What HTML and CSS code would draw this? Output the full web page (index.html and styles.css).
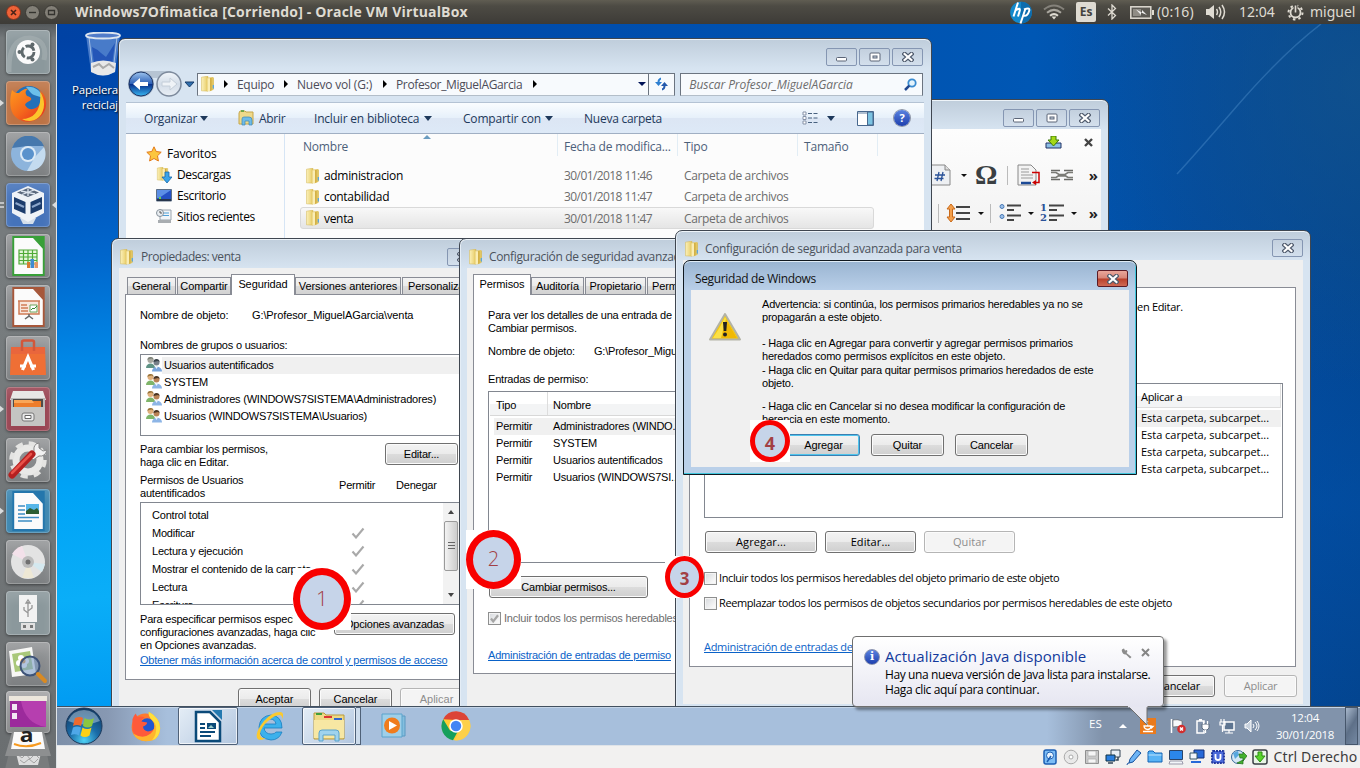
FILE: index.html
```html
<!DOCTYPE html>
<html lang="es">
<head>
<meta charset="utf-8">
<title>Windows7Ofimatica [Corriendo] - Oracle VM VirtualBox</title>
<link rel="stylesheet" href="styles.css">
</head>
<body>
<svg class="defs" width="0" height="0">
  <defs>
    <linearGradient id="gFold" x1="0" x2="1"><stop offset="0" stop-color="#fbf0b8"/><stop offset=".6" stop-color="#efda86"/><stop offset="1" stop-color="#dfc053"/></linearGradient>
    <linearGradient id="gBlue" x1="0" y1="0" x2="0" y2="1"><stop offset="0" stop-color="#9cc4ee"/><stop offset=".48" stop-color="#2f62b8"/><stop offset=".52" stop-color="#07308c"/><stop offset="1" stop-color="#39b7f2"/></linearGradient>
    <linearGradient id="gPale" x1="0" y1="0" x2="0" y2="1"><stop offset="0" stop-color="#f2f6fa"/><stop offset=".5" stop-color="#d3dde8"/><stop offset="1" stop-color="#e9eff5"/></linearGradient>
    <linearGradient id="gFox" x1="0" y1="0" x2="1" y2="1"><stop offset="0" stop-color="#ff9a1f"/><stop offset=".5" stop-color="#f4691c"/><stop offset="1" stop-color="#e3231f"/></linearGradient>
    <radialGradient id="gOrb" cx=".5" cy=".9" r=".9"><stop offset="0" stop-color="#4fd2f5"/><stop offset=".45" stop-color="#1a6ca8"/><stop offset="1" stop-color="#12375f"/></radialGradient>
    <symbol id="folder" viewBox="0 0 16 16"><path d="M1.500 1.200 7 .3h1v14.900l-6.500-.4z" fill="url(#gFold)" stroke="#d3b755" stroke-width=".5"/><path d="M7 1.800 13 1v13l-3 1.300-3-.3z" fill="#e2c662"/><path d="M7.500 2.200h2.700v12.500L7.500 15.300z" fill="#faedb4"/><path d="M10.200 2h1.300v12.300l-1.300.6z" fill="#cfaa3d"/><path d="M13 1.500h.8v12H13z" fill="#d9b94c"/><path d="M12.700 9h1.300v3.500h-1.300z" fill="#5ba6dc"/></symbol>
    <symbol id="users" viewBox="0 0 16 16"><circle cx="4.500" cy="4" r="3" fill="#e0b07c"/><path d="M1.500 4C1 0 8 0 7.500 4L6 2.500 3 3z" fill="#96733a"/><path d="M0 12c0-6 9-6 9 0z" fill="#7fb56a"/><circle cx="10.500" cy="6.500" r="3" fill="#b98255"/><path d="M7.500 6C7 2 14 2 13.500 6L12 5z" fill="#4a3524"/><path d="M6 15.500c0-6.500 10-6.500 10 0z" fill="#8db5e6"/><path d="M9 10.500l1.500 2.500 1.500-2.500z" fill="#eef4fb"/></symbol>
    <symbol id="users-g" viewBox="0 0 16 16"><circle cx="4.500" cy="4" r="3" fill="#a8a8a0"/><path d="M1.500 4C1 0 8 0 7.500 4L6 2.500 3 3z" fill="#7b8076"/><path d="M0 12c0-6 9-6 9 0z" fill="#5f9385"/><circle cx="10.500" cy="6.500" r="3" fill="#777f88"/><path d="M7.500 6C7 2 14 2 13.500 6L12 5z" fill="#39424a"/><path d="M6 15.500c0-6.500 10-6.500 10 0z" fill="#79a5dc"/><path d="M9 10.500l1.500 2.500 1.500-2.500z" fill="#eef4fb"/></symbol>
    <symbol id="x" viewBox="0 0 12 10"><path d="M2.600 2 9.400 8M9.400 2 2.600 8" stroke="#4f5a6c" stroke-width="4.400" stroke-linecap="square"/><path d="M2.600 2 9.400 8M9.400 2 2.600 8" stroke="#fff" stroke-width="2.200" stroke-linecap="square"/></symbol>
    <symbol id="min" viewBox="0 0 12 10"><rect x=".5" y="5.500" width="10" height="3.500" rx="1" fill="#fff" stroke="#5b6577"/></symbol>
    <symbol id="max" viewBox="0 0 12 10"><rect x="1" y="1" width="10" height="8" rx="1" fill="#fff" stroke="#5b6577"/><rect x="4" y="4" width="4" height="2" fill="#c9d5e2" stroke="#5b6577"/></symbol>
    <symbol id="tick" viewBox="0 0 14 12"><path d="M1.500 6.500 5 10.500 12.500 1.500" fill="none" stroke="#a9a9a9" stroke-width="2.100"/></symbol>
    <symbol id="doc" viewBox="0 0 34 42"><path d="M1 1h21l11 12v28H1z" fill="#fbfbfb" stroke="currentColor" stroke-width="2"/><path d="M22 0h12v13z" fill="currentColor"/></symbol>
    <symbol id="firefox" viewBox="0 0 38 38"><circle cx="20" cy="18" r="16" fill="#2370b8"/><path d="M17 3c9-1 15 4 18 12-5-4-9-2-13-6z" fill="#6cc0ea"/><path d="M3 6c3 3 4 3 7 3 3-3 7-5 9-4-3 2-3 4-1 7 3 1 5 2 4 4-3 2-5 2-6 5 3 6 11 5 14 0 5-7 2-12 0-15 9 5 9 18 3 25-8 9-22 9-29-1C0 23 1 13 3 6z" fill="url(#gFox)"/><path d="M31 8c6 8 5 19-1 25-7 6-13 4-17 2 12 0 20-9 18-27z" fill="#fcc52c"/></symbol>
    <symbol id="chrome" viewBox="0 0 40 40"><circle cx="20" cy="20" r="19" fill="#fc3"/><path d="M3 11A19 19 0 0 1 37.500 12H20z" fill="#dc4437"/><path d="M3 11l9 15 10 2-6 11A19 19 0 0 1 3 11z" fill="#159f5c"/><path d="M37.500 12A19 19 0 0 1 18 39l8-13 2-10-8-4z" fill="#fdd04a"/><circle cx="20" cy="20" r="9" fill="#fff"/><circle cx="20" cy="20" r="7" fill="#4285f4"/></symbol>
    <symbol id="pip" viewBox="0 0 5 8"><path d="M0 0l5 4-5 4z" fill="#dadcdd"/></symbol>
  </defs>
</svg>

<div class="screen">
  <header class="panel">
    <div class="dots">
      <svg width="15" height="15" viewBox="0 0 15 15"><circle cx="7.500" cy="7.500" r="7" fill="#ee6237" stroke="#7b3320"/><path d="M5 5l5 5M10 5l-5 5" stroke="#4a2318" stroke-width="1.600"/></svg>
      <svg width="15" height="15" viewBox="0 0 15 15"><circle cx="7.500" cy="7.500" r="7" fill="#827f77" stroke="#3a3833"/><path d="M4 7.500h7" stroke="#34332f" stroke-width="1.400"/></svg>
      <svg width="15" height="15" viewBox="0 0 15 15"><circle cx="7.500" cy="7.500" r="7" fill="#827f77" stroke="#3a3833"/><path d="M4.500 5.500h6v4h-6z" fill="none" stroke="#34332f" stroke-width="1.300"/></svg>
    </div>
    <div class="panel-title">Windows7Ofimatica [Corriendo] - Oracle VM VirtualBox</div>
    <div class="indicators">
      <svg class="i-hp" width="22" height="23" viewBox="0 0 22 22"><circle cx="11" cy="11" r="10.800" fill="#1389cc"/><path d="M11 .2a10.800 10.800 0 0 1 0 21.600z" fill="#0c6cae"/><g fill="none" stroke="#fff" stroke-width="2"><path d="M8 1 3.500 15M5.500 9c4-3 5-2 4 1L8 15M15.500 7 10.500 22M14 8c5-2 6-1 5 2s-3 5-6 4"/></g></svg>
      <svg class="i-wifi" width="22" height="16" viewBox="0 0 22 16"><g fill="none" stroke-width="2"><path d="M1 5.500Q11-2.500 21 5.500" stroke="#85827b"/><path d="M4 8.800Q11 3 18 8.800" stroke="#aaa79f"/><path d="M7 11.800Q11 8.500 15 11.800" stroke="#dfdbd2"/></g><path d="M8.500 12.500h5L11 15.500z" fill="#dfdbd2"/></svg>
      <span class="i-es">Es</span>
      <svg class="i-bt" width="10" height="16" viewBox="0 0 10 16"><path d="M1 4.500 8.500 11.500 5 15V1l3.500 3.500L1 11.500" fill="none" stroke="#dfdbd2" stroke-width="1.300"/></svg>
      <svg class="i-bat" width="24" height="13" viewBox="0 0 24 13"><rect x=".8" y=".8" width="20" height="11.400" fill="#5c5a54" stroke="#dfdbd2" stroke-width="1.500"/><path d="M22 4h2v5h-2z" fill="#dfdbd2"/><path d="M3 3h8v7H3z" fill="#8f8c85"/><path d="M6 3.500l6 3V4l5 5-6-2.500V9z" fill="#eee"/></svg>
      <span class="p-txt i-time">(0:16)</span>
      <svg class="i-vol" width="21" height="16" viewBox="0 0 21 16"><path d="M1 5h3l5-4v14l-5-4H1z" fill="#dfdbd2"/><path d="M11.500 5q2 3 0 6M14 3q3.500 5 0 10M17 1q5 7 0 14" fill="none" stroke="#dfdbd2" stroke-width="1.500"/></svg>
      <span class="p-txt i-clock">12:04</span>
      <svg class="i-gear" width="17" height="17" viewBox="0 0 17 17"><circle cx="8.500" cy="8.500" r="5" fill="none" stroke="#dfdbd2" stroke-width="1.800"/><circle cx="8.500" cy="8.500" r="7" fill="none" stroke="#dfdbd2" stroke-width="2" stroke-dasharray="2.500 3"/><path d="M6.500 0h4v8h-4z" fill="#4a4842"/><path d="M7.700 1.500h1.600v7H7.700z" fill="#dfdbd2"/></svg>
      <span class="p-txt i-user">miguel</span>
    </div>
  </header>

  <nav class="launcher">
    <div class="tile t-dash"><svg width="44" height="44" viewBox="0 0 44 44"><path d="M3 42Q2 8 24 8q18 2 14 22" fill="none" stroke="#a6b0b2" stroke-width="5" opacity=".6"/><circle cx="22" cy="22" r="12" fill="#fafafa"/><circle cx="22" cy="22" r="6" fill="none" stroke="#5f696c" stroke-width="2.800" stroke-dasharray="10.500 2"/><g fill="#5f696c"><circle cx="13.500" cy="22" r="2"/><circle cx="26.500" cy="14.500" r="2"/><circle cx="26.500" cy="29.500" r="2"/></g></svg></div>
    <div class="tile t-ff"><svg width="38" height="38"><use href="#firefox"/></svg><svg class="pip" width="4" height="8"><use href="#pip"/></svg></div>
    <div class="tile t-gray"><svg width="36" height="36" viewBox="0 0 36 36"><circle cx="18" cy="18" r="17" fill="#8db4dc"/><path d="M2 12A17 17 0 0 1 34 10H18z" fill="#4678ad"/><path d="M34 11A17 17 0 0 1 17 35l8-14z" fill="#c4dbef"/><circle cx="18" cy="18" r="8" fill="#dceaf6"/><circle cx="18" cy="18" r="6" fill="#5a92cc"/></svg></div>
    <div class="tile t-vbox"><svg width="36" height="40" viewBox="0 0 36 40"><path d="M10 33h16l-3 6H13z" fill="#d3deeb"/><path d="M18 1 34 8v20l-16 9L2 28V8z" fill="#eef2f7"/><path d="M18 3 29 7.500l-11 4.500L7 7.500z" fill="#5a687c"/><path d="M11 6l14 3M24 5 12 9.500M18 3.500V11" stroke="#dce4ee" stroke-width="1.300"/><path d="M4 12l11.500 5v12L4 24zM32 12l-11.500 5v12L32 24z" fill="#1c3c6c"/><path d="M5.500 18l8.500 4M22 22l8.500-4" stroke="#8ba5ca" stroke-width="2"/></svg><svg class="pip" width="4" height="8" viewBox="0 0 4 8"><path d="M0 2h4M0 6h4" stroke="#dadcdd" stroke-width="1.500"/></svg><svg class="pip-r" width="4" height="8" viewBox="0 0 5 8"><path d="M5 0 0 4l5 4z" fill="#dadcdd"/></svg></div>
    <div class="tile t-gray c-green"><svg width="33" height="40"><use href="#doc"/></svg><svg class="over" width="22" height="20" viewBox="0 0 22 20"><path d="M1 1h18v14H1zM1 4.500h18M1 8h18M1 11.500h18M5.500 1v14M10 1v14M14.500 1v14" fill="#e3f5d8" stroke="#4faa37" stroke-width="1.200"/><path d="M9 13h3v6H9z" fill="#d77b30"/><path d="M12.500 10H16v9h-3.500z" fill="#3f8bd0"/><path d="M16.500 13H20v6h-3.500z" fill="#e39865"/></svg></div>
    <div class="tile t-gray c-brown"><svg width="33" height="40"><use href="#doc"/></svg><svg class="over" width="22" height="20" viewBox="0 0 22 20"><path d="M1 1h20v13H1zM0 1h22" fill="#f8e6dc" stroke="#cf7c56" stroke-width="1.500"/><path d="M3 5h6M3 8h7M3 11h7" stroke="#cf7c56" stroke-width="1.500"/><path d="M12 5h7v7h-7z" fill="#fff" stroke="#6aa55a"/><path d="M13 10l2-2 1 1 3-3" stroke="#358a35" fill="none"/><path d="M11 14v2l-4 3M11 16l4 3" stroke="#666" fill="none" stroke-width="1.500"/></svg></div>
    <div class="tile t-gray"><svg width="38" height="40" viewBox="0 0 38 40"><path d="M2 9h34l1 28H1z" fill="#ef6f35"/><path d="M2 9h34v7H2z" fill="#e9663c"/><path d="M13 13V4q0-1.500 2-1.500h8q2 0 2 1.500v9" fill="none" stroke="#d2573a" stroke-width="2.500"/><path d="M13.500 32 19 19l5.500 13M11 28h6m4 0h6" fill="none" stroke="#fff" stroke-width="3.200"/></svg></div>
    <div class="tile t-red"><svg width="36" height="38" viewBox="0 0 36 38"><path d="M3 1h30l3 9H0z" fill="#e8e8e6"/><path d="M1 8h34v28H1z" fill="#b9b9b7"/><path d="M3 9h30v9H3z" fill="#4f4b47"/><path d="M4 11h27v7H4z" fill="#ed7c2a"/><path d="M4 10h18l2 3H4z" fill="#f9a658"/><path d="M1 17h34v19H1z" fill="#c4c4c2"/><rect x="12" y="23" width="12" height="8" rx="2" fill="#e8e8e8" stroke="#777"/><path d="M15 25.500h6v3h-6z" fill="#fff" stroke="#666"/></svg><svg class="pip" width="4" height="8"><use href="#pip"/></svg></div>
    <div class="tile t-gray"><svg width="40" height="40" viewBox="0 0 40 40"><circle cx="20" cy="20" r="12" fill="none" stroke="#e9e9e7" stroke-width="7"/><circle cx="20" cy="20" r="16.500" fill="none" stroke="#e4e4e2" stroke-width="4.500" stroke-dasharray="7 6"/><path d="M31 3q-6 1-5 8l-4 6 3 3 6-4q6 1 8-6l-4 1-4-3z" fill="#f1f1f1" stroke="#888"/><path d="M24 14 4 35" stroke="#b52020" stroke-width="7" stroke-linecap="round"/><path d="M23 14 4 33" stroke="#e85249" stroke-width="2.500" stroke-linecap="round"/></svg></div>
    <div class="tile t-writer c-blue"><svg width="33" height="40"><use href="#doc"/></svg><svg class="over" width="22" height="18" viewBox="0 0 22 18"><path d="M0 2h7M0 6h7M0 10h7M0 13.500h21M0 17h14" stroke="#3d8dc4" stroke-width="1.600"/><path d="M8 0h13v10H8z" fill="#57b6e8"/><path d="M8 10V7l4-3 4 2 3-2 2 3v3z" fill="#2d5e33"/></svg><svg class="pip" width="4" height="8"><use href="#pip"/></svg></div>
    <div class="tile t-gray"><svg width="36" height="36" viewBox="0 0 36 36"><circle cx="18" cy="18" r="17" fill="#e3e3e3"/><path d="M18 18 2 10A17 17 0 0 1 12 2z" fill="#f3e1ea"/><path d="M18 18l17 2-3 8z" fill="#d4e8ef"/><path d="M18 18l6 16H12z" fill="#eee8d5"/><circle cx="18" cy="18" r="6" fill="#bbb"/><circle cx="18" cy="18" r="2.500" fill="#707070"/></svg></div>
    <div class="tile t-dash"><svg width="20" height="38" viewBox="0 0 20 38"><path d="M1 1h18v27H1z" fill="#f2f2f2"/><path d="M3 29h14v7H3z" fill="#e1e1e1"/><path d="M5 31h3v3H5zM12 31h3v3h-3z" fill="#777"/><path d="M10 23V8M10 19l-4-3v-3M10 17l4-3v-3M8 9l2-3 2 3z" stroke="#969696" fill="none" stroke-width="1.300"/></svg></div>
    <div class="tile t-gray"><svg width="40" height="40" viewBox="0 0 40 40"><path d="M1 7 24 3l4 27-24 3z" fill="#f8f8f6"/><path d="M4 10l18-3 3 18-18 3z" fill="#a9c87a"/><g fill="#fff"><circle cx="13" cy="14" r="3"/><circle cx="18" cy="17" r="3"/><circle cx="11" cy="19" r="3"/><circle cx="16" cy="21" r="3"/></g><circle cx="15" cy="17" r="2.500" fill="#e5902b"/><circle cx="22" cy="22" r="9.500" fill="#7f9fc9" fill-opacity=".6" stroke="#3e5378" stroke-width="2"/><path d="M30 30l7 7" stroke="#d98a22" stroke-width="4" stroke-linecap="round"/></svg></div>
    <div class="tile t-work"><svg width="38" height="32" viewBox="0 0 38 32"><path d="M0 0h38v5H0z" fill="#ece6dc"/><path d="M1 5h36v26H1z" fill="#9c2a9c"/><path d="M12 5h25v26Q16 28 12 5z" fill="#c84fbd" opacity=".6"/><path d="M3 8h5v6H3zM3 17h5v6H3z" fill="#f3e9f5"/></svg></div>
    <div class="folded"><svg width="46" height="24" viewBox="0 0 46 24"><path d="M7 0h32l7 24H0z" fill="#8d8f90"/><path d="M9 0h28l3 17H6z" fill="#fafafa"/><path d="M9 12q13 5 27-1" stroke="#f79a1f" stroke-width="2" fill="none"/></svg><span>a</span></div>
    <div class="bin"><svg width="46" height="20" viewBox="0 0 46 20"><path d="M5 0h36l4 20H0z" fill="#797c7d"/><path d="M11 4h25l-3 12H14z" fill="#dedede"/><path d="M12 5l5 4 4-4 4 5 5-5 4 4M15 11l4 3 5-4 5 4 4-4" stroke="#a3a3a3" fill="none"/></svg></div>
  </nav>

  <div class="guest">
  <main class="desktop"><svg width="303" height="200" viewBox="0 0 303 200"><path d="M0 0h303v200H0z" fill="none"/><path d="M264 0Q225 30 180 82T120 150" fill="none" stroke="#5f9ed6" stroke-opacity=".35" stroke-width="1.500"/></svg></main>
  <div class="recycle">
    <svg width="36" height="46" viewBox="0 0 36 46"><path d="M1 3h34l-5 37q-12 7-24 0z" fill="#6f99dc" opacity=".65"/><path d="M7 15q5 2 9 6l5 4 9-14-3 22-18-1z" fill="#2456b8"/><path d="M4 5l4 35M32 5l-4 35" stroke="#c7d9f0" opacity=".7"/><ellipse cx="18" cy="3.500" rx="17" ry="3" fill="#517cc9" stroke="#dce5ef" stroke-width="1.800"/><path d="M6 31q12-5 25 0l-1 9q-12 7-24 0z" fill="#e8e8e8"/><path d="M8 35l6-3 4 4 6-4 5 4" stroke="#aaa" fill="none" stroke-width="2"/></svg>
    <span>Papelera de</span><span>reciclaje</span>
  </div>

  <section class="win libre">
    <div class="titlebar"><div class="ctl"><b><svg width="12" height="10"><use href="#min"/></svg></b><b><svg width="12" height="10"><use href="#max"/></svg></b><b><svg width="12" height="10"><use href="#x"/></svg></b></div></div>
    <div class="libre-body">
      <div class="lrow lr1"><svg width="17" height="13" viewBox="0 0 17 13"><path d="M1 7h15v5H1z" fill="#8cbfe4" stroke="#236"/><path d="M6 0h5v4h3l-5.500 6L3 4h3z" fill="#a4d816" stroke="#3c7a06"/></svg><svg width="9" height="9" viewBox="0 0 9 9"><path d="M1 1l7 7M8 1 1 8" stroke="#444" stroke-width="2.400"/></svg></div>
      <div class="lrow lr2">
        <svg width="20" height="23" viewBox="0 0 20 23"><path d="M-2 1h15l5 5v15H-2z" fill="#eef0f3" stroke="#888"/><path d="M13 1v5h5" fill="#ddd" stroke="#888"/><path d="M5 17l2-9M9 17l2-9M3 11h10M2.500 14.500h9" stroke="#2a5298" stroke-width="1.300"/></svg>
        <i class="car"></i><span class="omega">Ω</span><i class="sep"></i>
        <svg width="23" height="23" viewBox="0 0 23 23"><path d="M1 1h13l5 5v15H1z" fill="#f3f3f3" stroke="#888"/><path d="M4 5h8M4 8h8M4 11h12M4 14h12" stroke="#999"/><path d="M4 19h10" stroke="#1c4a96" stroke-width="2.500"/><path d="M15 8.500h7v10h-5" fill="none" stroke="#c00" stroke-width="1.500"/><path d="M19 16v5l-4-2.500z" fill="#c00"/></svg>
        <svg class="chain" width="22" height="12" viewBox="0 0 22 12"><path d="M0 1.500h9M13 1.500h9M0 10.500h9M13 10.500h9" stroke="#6a6a66" stroke-width="1.500"/><path d="M0 3.500h5l3 2h6l3-2h5M0 8.500h5l3-2M22 8.500h-5l-3-2M7 7h8" stroke="#7b7b76" stroke-width="1.600" fill="none"/></svg>
        <b class="more">»</b>
      </div>
      <div class="lrow lr3">
        <i class="sep"></i>
        <svg width="25" height="20" viewBox="0 0 25 20"><path d="M5 1l4 5H6.500v8H9l-4 5-4-5h2.500V6H1z" fill="#f4a04c" stroke="#c96a1a"/><path d="M10 4h14M10 10h14M10 16h14" stroke="#444" stroke-width="2.200"/></svg><i class="car"></i><i class="sep"></i>
        <svg width="22" height="20" viewBox="0 0 22 20"><circle cx="3" cy="3.500" r="2" fill="#9cc0ea" stroke="#4a7ab5"/><circle cx="3" cy="13.500" r="2" fill="#9cc0ea" stroke="#4a7ab5"/><path d="M8 2.500h14M8 7h7M8 12.500h14M8 17h7" stroke="#444" stroke-width="2"/></svg><i class="car"></i>
        <span class="nums">1<br>2</span><svg width="15" height="20" viewBox="0 0 15 20"><path d="M0 2.500h15M0 7h8M0 12.500h15M0 17h8" stroke="#444" stroke-width="2"/></svg><i class="car"></i><b class="more">»</b>
      </div>
    </div>
  </section>

  <section class="win explorer">
    <div class="titlebar"><div class="ctl"><b><svg width="12" height="10"><use href="#min"/></svg></b><b><svg width="12" height="10"><use href="#max"/></svg></b><b><svg width="12" height="10"><use href="#x"/></svg></b></div></div>
    <div class="addr">
      <svg class="nav" width="69" height="28" viewBox="0 0 69 28"><path d="M14 1h30v5Q28 10 14 6z" fill="#a8b6c6" opacity=".7"/><circle cx="14" cy="14" r="13" fill="#9fb0c4"/><circle cx="14" cy="14" r="12" fill="url(#gBlue)" stroke="#1f3768"/><path d="M6 14l7-6v4h8v4h-8v4z" fill="#fff"/><circle cx="42" cy="14" r="12" fill="url(#gPale)" stroke="#7d8a9c" stroke-width="1.500"/><path d="M50 14l-7-6v4h-8v4h8v4z" fill="#eff3f7" stroke="#c4ced9"/><path d="M58 12h9l-4.500 5z" fill="#2f6fae" stroke="#163c6b"/></svg>
      <div class="path"><svg width="16" height="16"><use href="#folder"/></svg><i class="ar"></i><span class="w1">Equipo</span><i class="ar"></i><span class="w2">Nuevo vol (G:)</span><i class="ar"></i><span class="w3">Profesor_MiguelAGarcia</span><i class="ar"></i><i class="car big"></i><span class="rf"><svg width="15" height="14" viewBox="0 0 15 14"><path d="M1 5h2.500Q3.500 1.500 7 .5v2Q5.500 3 5.500 5H8L4.500 9z" fill="#2d7fd0"/><path d="M14 9h-2.500q0 3.500-3.500 4.500v-2q1.500-.5 1.500-2.500H7l3.500-4z" fill="#2459ac"/></svg></span></div>
      <div class="search"><span>Buscar Profesor_MiguelAGarcia</span><svg width="13" height="13" viewBox="0 0 13 13"><circle cx="8" cy="5" r="3.700" fill="#e3f3fc" stroke="#3a8bd0" stroke-width="1.800"/><path d="M5.300 7.700 1 12" stroke="#21488f" stroke-width="2.500"/></svg></div>
    </div>
    <div class="toolbar">
      <span class="tb1">Organizar</span><i class="car nv"></i>
      <svg class="tbi" width="17" height="16" viewBox="0 0 17 16"><path d="M1 3l1-2h5l1 1h7v12H1z" fill="#efd98a" stroke="#c6a648"/><path d="M3 1h3" stroke="#4c9d3b" stroke-width="1.500"/><path d="M4 15V9q0-2 2-2h5q3 0 3 3v5h-3v-4H7v4z" fill="#6fbbe6" stroke="#3b86b8" stroke-width=".7"/></svg><span class="tb2">Abrir</span>
      <span class="tb3">Incluir en biblioteca</span><i class="car nv"></i>
      <span class="tb4">Compartir con</span><i class="car nv"></i>
      <span class="tb5">Nueva carpeta</span>
      <svg class="v1" width="16" height="14" viewBox="0 0 16 14"><path d="M1 1h3v3H1zM1 5.500h3v3H1zM1 10h3v3H1z" fill="#fff" stroke="#8793a8"/><path d="M6 2.500h4M11.500 2.500h4M6 7h4M11.500 7h4M6 11.500h4M11.500 11.500h4" stroke="#47617f" stroke-width="1.200"/></svg><i class="car nv"></i>
      <svg class="v2" width="17" height="15" viewBox="0 0 17 15"><path d="M.5.500h16v14H.5z" fill="#fff" stroke="#48688e"/><path d="M1 1h9v2H1z" fill="#aebed0"/><path d="M10.500 1H16v13h-5.500z" fill="#7cc3e2" stroke="#48688e"/></svg>
      <span class="help">?</span>
    </div>
    <div class="ex-body">
      <div class="side">
        <div class="s0"><svg width="16" height="16" viewBox="0 0 16 16"><path d="M8 .8l2.200 4.700 5 .7-3.700 3.600.9 5.200L8 12.500 3.600 15l.9-5.200L.8 6.200l5-.7z" fill="#fcc63e" stroke="#e27a1a"/></svg><span>Favoritos</span></div>
        <div class="s1"><svg width="16" height="16" viewBox="0 0 16 16"><use href="#folder" width="14" height="14"/><path d="M9 5h4v5h3l-5 6-5-6h3z" fill="#3aa3e8" stroke="#1668aa" stroke-width=".8"/></svg><span>Descargas</span></div>
        <div class="s1"><svg width="16" height="13" viewBox="0 0 16 13"><path d="M.5.500h15v11.500H.5z" fill="#2451c4" stroke="#5d6f86"/><path d="M1 1h14L3 9H1z" fill="#5c8fe6"/><path d="M1 10h14v2H1z" fill="#27364d"/><path d="M3 8h2v2H3z" fill="#6ad14c"/></svg><span>Escritorio</span></div>
        <div class="s1"><svg width="16" height="15" viewBox="0 0 16 15"><path d="M4 1h11v10H4z" fill="#f2f5f8" stroke="#9aa4ae"/><path d="M7 4h6M7 6.500h6" stroke="#4fa0d8"/><path d="M2 11h13v3H2z" fill="#a9adb1"/><circle cx="4" cy="4" r="3.500" fill="#e9edf1" stroke="#87919b"/><path d="M4 2v2h2" stroke="#555" fill="none"/></svg><span>Sitios recientes</span></div>
      </div>
      <div class="files">
        <i class="sortup"></i>
        <div class="fh"><span class="c1">Nombre</span><span class="c2">Fecha de modifica...</span><span class="c3">Tipo</span><span class="c4">Tamaño</span></div>
        <div class="fr"><svg width="16" height="16"><use href="#folder"/></svg><span class="fn">administracion</span><span class="fd">30/01/2018 11:46</span><span class="ft">Carpeta de archivos</span></div>
        <div class="fr"><svg width="16" height="16"><use href="#folder"/></svg><span class="fn">contabilidad</span><span class="fd">30/01/2018 11:47</span><span class="ft">Carpeta de archivos</span></div>
        <div class="fr sel"><svg width="16" height="16"><use href="#folder"/></svg><span class="fn">venta</span><span class="fd">30/01/2018 11:47</span><span class="ft">Carpeta de archivos</span></div>
      </div>
    </div>
  </section>

  <section class="win props">
    <div class="titlebar"><svg width="16" height="16"><use href="#folder"/></svg><span class="tt t-prop">Propiedades: venta</span><div class="ctl"><b><svg width="12" height="10"><use href="#x"/></svg></b></div></div>
    <div class="client">
      <div class="tabs"><span class="tab ta1">General</span><span class="tab ta2">Compartir</span><span class="tab on ta3">Seguridad</span><span class="tab ta4">Versiones anteriores</span><span class="tab ta5">Personalizar</span></div>
      <div class="pane ms">
        <div class="p-name"><span>Nombre de objeto:</span><span>G:\Profesor_MiguelAGarcia\venta</span></div>
        <div class="p-groups">Nombres de grupos o usuarios:</div>
        <div class="ulist">
          <div class="u"><svg width="16" height="16"><use href="#users-g"/></svg><span class="hl">Usuarios autentificados</span></div>
          <div class="u"><svg width="16" height="16"><use href="#users"/></svg><span>SYSTEM</span></div>
          <div class="u"><svg width="16" height="16"><use href="#users"/></svg><span>Administradores (WINDOWS7SISTEMA\Administradores)</span></div>
          <div class="u"><svg width="16" height="16"><use href="#users"/></svg><span>Usuarios (WINDOWS7SISTEMA\Usuarios)</span></div>
        </div>
        <div class="p-edit"><p>Para cambiar los permisos,<br>haga clic en Editar.</p><span class="btn b73">Editar...</span></div>
        <div class="p-head"><p>Permisos de Usuarios<br>autentificados</p><span class="h1c">Permitir</span><span class="h2c">Denegar</span></div>
        <div class="perm">
          <div class="perm-rows">
            <div>Control total</div>
            <div>Modificar<svg width="14" height="12"><use href="#tick"/></svg></div>
            <div>Lectura y ejecución<svg width="14" height="12"><use href="#tick"/></svg></div>
            <div>Mostrar el contenido de la carpeta<svg width="14" height="12"><use href="#tick"/></svg></div>
            <div>Lectura<svg width="14" height="12"><use href="#tick"/></svg></div>
            <div>Escritura<svg width="14" height="12"><use href="#tick"/></svg></div>
          </div>
          <div class="sbar"><i class="up"></i><b></b><i class="dn"></i></div>
        </div>
        <div class="p-adv"><p>Para especificar permisos especiales o<br>configuraciones avanzadas, haga clic<br>en Opciones avanzadas.</p><span class="btn b122">Opciones avanzadas</span></div>
        <a class="lnk more-info">Obtener más información acerca de control y permisos de acceso</a>
      </div>
      <div class="foot ms"><span class="btn b73">Aceptar</span><span class="btn b73">Cancelar</span><span class="btn b73 dis">Aplicar</span></div>
    </div>
  </section>

  <section class="win adv1">
    <div class="titlebar"><svg width="16" height="16"><use href="#folder"/></svg><span class="tt t-cfg">Configuración de seguridad avanzada</span></div>
    <div class="client">
      <div class="tabs"><span class="tab on tc1">Permisos</span><span class="tab tc2">Auditoría</span><span class="tab tc3">Propietario</span><span class="tab tc4">Permisos efectivos</span></div>
      <div class="pane ms">
        <p class="q1">Para ver los detalles de una entrada de permiso<br>Cambiar permisos.</p>
        <div class="q2"><span>Nombre de objeto:</span><span>G:\Profesor_MiguelAGarcia\venta</span></div>
        <div class="q3">Entradas de permiso:</div>
        <div class="etable">
          <div class="eh"><span>Tipo</span><span>Nombre</span></div>
          <div class="er hl2"><span>Permitir</span><span>Administradores (WINDO...</span></div>
          <div class="er"><span>Permitir</span><span>SYSTEM</span></div>
          <div class="er"><span>Permitir</span><span>Usuarios autentificados</span></div>
          <div class="er"><span>Permitir</span><span>Usuarios (WINDOWS7SI...</span></div>
        </div>
        <span class="btn b159">Cambiar permisos...</span>
        <div class="chk gray"><i><svg width="9" height="9" viewBox="0 0 14 12"><path d="M1.500 6 5 10.500 12.500 1" fill="none" stroke="#a5a5a5" stroke-width="3.500"/></svg></i><span>Incluir todos los permisos heredables</span></div>
        <a class="lnk l2">Administración de entradas de permiso</a>
      </div>
    </div>
  </section>

  <section class="win adv2">
    <div class="titlebar"><svg width="16" height="16"><use href="#folder"/></svg><span class="tt t-cfg">Configuración de seguridad avanzada para venta</span><div class="ctl"><b><svg width="12" height="10"><use href="#x"/></svg></b></div></div>
    <div class="client tah">
      <div class="pane">
        <div class="r1">en Editar.</div>
        <div class="rtable">
          <div class="rh">Aplicar a</div>
          <div class="rr hl3">Esta carpeta, subcarpet...</div>
          <div class="rr">Esta carpeta, subcarpet...</div>
          <div class="rr">Esta carpeta, subcarpet...</div>
          <div class="rr">Esta carpeta, subcarpet...</div>
        </div>
        <div class="rbtns"><span class="btn b112">Agregar...</span><span class="btn b91">Editar...</span><span class="btn b91 dis">Quitar</span></div>
        <div class="chk k1"><i></i><span>Incluir todos los permisos heredables del objeto primario de este objeto</span></div>
        <div class="chk k2"><i></i><span>Reemplazar todos los permisos de objetos secundarios por permisos heredables de este objeto</span></div>
        <a class="lnk l3">Administración de entradas de</a>
      </div>
      <div class="foot3"><span class="btn b73">Cancelar</span><span class="btn b73 dis">Aplicar</span></div>
    </div>
  </section>

  <section class="win dlg">
    <div class="titlebar"><span class="tt">Seguridad de Windows</span><div class="ctl red"><b><svg width="12" height="10"><use href="#x"/></svg></b></div></div>
    <div class="dlg-body ms">
      <svg class="warn" width="32" height="28" viewBox="0 0 32 28"><path d="M16 1 31 26.500H1z" fill="#f6c90e" stroke="#b3b3a6" stroke-width="2" stroke-linejoin="round"/><path d="M16 4 28 25H4l7-11z" fill="#fbe046"/><path d="M17 6l11 19H12z" fill="#f0b905"/><path d="M14 9h4l-.7 9h-2.600z" fill="#222"/><circle cx="16" cy="21.500" r="2" fill="#222"/></svg>
      <div class="dlg-txt">
        <p>Advertencia: si continúa, los permisos primarios heredables ya no se<br>propagarán a este objeto.</p>
        <p class="g13">- Haga clic en Agregar para convertir y agregar permisos primarios<br>heredados como permisos explícitos en este objeto.</p>
        <p class="g1">- Haga clic en Quitar para quitar permisos primarios heredados de este<br>objeto.</p>
        <p class="g10">- Haga clic en Cancelar si no desea modificar la configuración de<br>herencia en este momento.</p>
        <div class="dbtns"><span class="btn b73 def">Agregar</span><span class="btn b73">Quitar</span><span class="btn b73">Cancelar</span></div>
      </div>
    </div>
  </section>
  </div>

  <div class="mark m1"><span>1</span></div>
  <div class="mark m2"><span>2</span></div>
  <div class="mark m3"><span>3</span></div>
  <div class="mark m4"><span>4</span></div>

  <footer class="taskbar">
    <svg class="orb" width="38" height="38" viewBox="0 0 38 38"><circle cx="19" cy="19" r="18" fill="url(#gOrb)" stroke="#1d3a5c"/><path d="M3 14Q8 3 19 3t16 11q-16 7-32 0z" fill="#cfe2f0" opacity=".45"/><path d="M10 11q5-2 8 0l-2 8q-4-2-8 0z" fill="#ee6a2d"/><path d="M19.500 11q5 3 9.500 0l-2 8q-4 3-9 0z" fill="#8cc63f"/><path d="M8 20.500q4-2 8 0l-2 8q-4-2-8-.5z" fill="#4fa8e8"/><path d="M17.500 20.500q5 3 9 0l-2 8q-5 3-9 0z" fill="#fcd116"/></svg>
    <svg class="tfox" width="31" height="31" viewBox="0 0 38 38"><circle cx="19" cy="20" r="17" fill="#ff7a2e"/><circle cx="21" cy="18" r="9" fill="#2457cf"/><path d="M3 10q2-5 4-7l2 4q6-1 9 1-4 2-4 5l7 1q0 3-5 5 0 5 6 6 6 0 9-5 1 9-7 12Q8 35 3 24z" fill="#ff5a3a"/><path d="M23 1q14 8 14 20-1 16-17 16Q8 37 4 28q12 7 21 0 7-6 4-14l-4-5q-3-4-2-8z" fill="#ffb42e"/><path d="M23 1q14 8 14 20-1 12-10 15 6-7 5-17-1-5-7-10-3-4-2-8z" fill="#ffdf3d"/></svg>
    <div class="tbtn w"><svg width="28" height="33" viewBox="0 0 28 33"><path d="M2 2h14l10 10v19H2z" fill="#fff" stroke="#0b4a79" stroke-width="2.500"/><path d="M18 0h10v10z" fill="#2379b0"/><path d="M6 14h5M6 18h5M6 22h15M6 26h11" stroke="#0b4a79" stroke-width="2"/><path d="M13 13h9v6h-9z" fill="#0b4a79"/><path d="M14 18l3-3 3 3z" fill="#9cc"/></svg></div>
    <svg class="ie" width="32" height="32" viewBox="0 0 32 32"><path d="M28 18H10q1 6 7 6 4 0 5-2h6q-3 8-11 8Q5 29 5 17 6 6 17 5q11 1 11 13zM10 14h12q-1-5-6-5t-6 5z" fill="#3cb1ec" stroke="#1b7fc0" stroke-width=".8" fill-rule="evenodd"/><path d="M28 10q3-8-2-8-8 0-16 9-9 11-7 17 2 4 9 0-6 1-6-4 1-7 8-13 8-7 12-6 3 1 2 5z" fill="#fbc92f"/></svg>
    <div class="tbtn e"><svg width="34" height="31" viewBox="0 0 34 31"><path d="M2 2h10l2 2h18v24H2z" fill="#efd984" stroke="#b99a3e"/><path d="M4 3h6" stroke="#3f9e3a" stroke-width="2"/><path d="M12 6h8" stroke="#d33" stroke-width="2"/><path d="M22 8h8" stroke="#36c" stroke-width="2"/><path d="M2 9h30v18H2z" fill="#f7e7a3"/><path d="M7 30V22q0-3 3-3h14q3 0 3 3v8h-4v-6H11v6z" fill="#9fd3ee" stroke="#5ba3cc"/></svg></div>
    <i class="tedge"></i>
    <svg class="wmp" width="28" height="26" viewBox="0 0 28 26"><path d="M8 3h17v20H8z" fill="#85bede" stroke="#5b9ac2"/><path d="M2 1h20v23H2z" fill="#9fcfe8" stroke="#5ba3cc"/><circle cx="12" cy="12.500" r="8" fill="#f07c1d"/><path d="M9 8l8 4.500-8 4.500z" fill="#fff"/></svg>
    <svg class="tchr" width="30" height="30"><use href="#chrome"/></svg>
    <div class="tray">
      <span class="t-es">ES</span><i class="tri"></i>
      <svg class="jv" width="16" height="16" viewBox="0 0 16 16"><path d="M0 0h16v16H0z" fill="#ea7a1c"/><path d="M8 3q-3 2 0 4M4 8h7q0 3-3 3.500Q4 11 4 8zM11 8.500h2l-2 2M3 13.500h10" stroke="#fff" fill="none" stroke-width="1.300"/></svg>
      <svg class="fl" width="16" height="16" viewBox="0 0 16 16"><path d="M1.500 1v14" stroke="#fff" stroke-width="1.500"/><path d="M3 2q4-1 9 1v6q-5-1-9 0z" fill="#f7f9fb" stroke="#444" stroke-width=".5"/><circle cx="11.500" cy="11" r="4.300" fill="#d22d2d"/><path d="M10 9.500l3 3M13 9.500l-3 3" stroke="#fff" stroke-width="1.500"/></svg>
      <svg class="pl" width="15" height="16" viewBox="0 0 15 16"><path d="M2 3h7v12H2z" fill="none" stroke="#fff" stroke-width="1.500"/><path d="M4 1h3v2H4z" fill="#fff"/><path d="M7 6h7v4l-2 2H9l-2-2z" fill="#fff" stroke="#5c6c80"/><path d="M8.500 3v3M12.500 3v3M10.500 12v3" stroke="#fff" stroke-width="1.300"/></svg>
      <svg class="nt" width="16" height="16" viewBox="0 0 16 16"><path d="M5 4h10v8H5z" fill="#5e7591" stroke="#fff" stroke-width="1.500"/><path d="M10 12v3M6 15h8M2 1v3M5 1v3M1 4h5v3H1zM3.500 7v7" stroke="#fff" stroke-width="1.200" fill="none"/></svg>
      <svg class="sp" width="16" height="16" viewBox="0 0 16 16"><path d="M1 6h2l4-4v12l-4-4H1z" fill="#c8d2de" stroke="#fff"/><path d="M9 6q2 2 0 4M11 4q4 4 0 8M13 3q4 5 0 10" fill="none" stroke="#fff"/></svg>
      <div class="clk"><span>12:04</span><span>30/01/2018</span></div>
      <i class="peek"></i>
    </div>
  </footer>

  <div class="status">
    <svg width="16" height="16" viewBox="0 0 16 16"><rect x="2" y="1" width="12" height="14" rx="2" fill="#7dbdf5" stroke="#1d5fb4" stroke-width="1.500"/><circle cx="8" cy="6.500" r="3.500" fill="#e8f4ff" stroke="#1d5fb4"/><path d="M5 13l4-6" stroke="#1d5fb4" stroke-width="1.500"/></svg>
    <svg width="16" height="16" viewBox="0 0 16 16"><circle cx="8" cy="8" r="6.800" fill="#e9e9e9" stroke="#aaa"/><circle cx="8" cy="8" r="2" fill="#fff" stroke="#aaa"/></svg>
    <svg width="16" height="16" viewBox="0 0 16 16"><path d="M1.500 1.500h13v13h-13z" fill="#c9c9c9" stroke="#8f8f8f"/><path d="M4 2h8v5H4zM4 10h8v4H4z" fill="#f5f5f5" stroke="#aaa" stroke-width=".7"/></svg>
    <svg width="16" height="16" viewBox="0 0 16 16"><path d="M6 1h9v7H6z" fill="#e8eef5" stroke="#345"/><path d="M1 6h9v6H1z" fill="#2a7fe0" stroke="#134"/><path d="M3 14h5M13 8v3h-2" stroke="#345" fill="none" stroke-width="1.500"/></svg>
    <svg width="16" height="16" viewBox="0 0 16 16"><path d="M11 1l4 3-8 9-4 1 1-4z" fill="#6db4f5" stroke="#15529f"/><path d="M3 14q-2 0-2 2" stroke="#15529f" fill="none"/></svg>
    <svg width="16" height="16" viewBox="0 0 16 16"><path d="M1 13V3l1-1h4l2 2h7v9z" fill="#58b3f5" stroke="#1565b5"/><path d="M1.500 6h13" stroke="#bfe2fb"/></svg>
    <svg width="16" height="16" viewBox="0 0 16 16"><path d="M1.500 1.500h13v9h-13z" fill="#2b87ea" stroke="#2b4568"/><path d="M2 12h12l1 3H1z" fill="#f3f6fa" stroke="#99a"/></svg>
    <svg width="16" height="16" viewBox="0 0 16 16"><path d="M5 1h10v8H5z" fill="#2769d8" stroke="#122f77"/><path d="M1 4h7v6H1z" fill="#f1f5fb" stroke="#356"/><path d="M2 12h10v2H2z" fill="#2769d8"/></svg>
    <svg width="16" height="16" viewBox="0 0 16 16"><rect x="2" y="2" width="12" height="12" rx="1" fill="#4a68d8" stroke="#2338a0" stroke-width="2" stroke-dasharray="2 1"/><path d="M5.500 5v3.500q0 2.500 2.500 2.500t2.500-2.500V5" fill="none" stroke="#fff" stroke-width="1.800"/></svg>
    <svg width="16" height="16" viewBox="0 0 16 16"><circle cx="7" cy="8" r="6.500" fill="#d5e7f5" stroke="#369"/><path d="M2 4l5-2 1 4-4 4z" fill="#58a7df"/><path d="M8 5h4V3l4 4-4 5V9H9zM6 14l6-3v4z" fill="#43b02e" stroke="#24701a" stroke-width=".7"/></svg>
    <svg width="16" height="16" viewBox="0 0 16 16"><rect x="1" y="1" width="14" height="14" rx="2" fill="#e8f5e6" stroke="#3a3f44" stroke-width="1.500"/><path d="M6 3h4v4h3l-5 6-5-6h3z" fill="#57d52a" stroke="#2c8a12"/></svg>
    <span>Ctrl Derecho</span>
  </div>

  <aside class="balloon">
    <svg class="tail" width="22" height="20" viewBox="0 0 22 20"><path d="M0 0l19 19V0" fill="#e7e7f1" stroke="#6f6f6f"/><path d="M0 0h19.500" stroke="#e6e6f1" stroke-width="2.500"/></svg>
    <span class="info">i</span>
    <div class="bal-main">
      <div class="bal-h"><span>Actualización Java disponible</span><svg width="11" height="11" viewBox="0 0 11 11"><path d="M1 3.500Q0 1 3 .5l1 2 2-.5q1 2-.5 3L10.500 9 9 10.500 5 6.500Q2 7 1 3.500z" fill="#8c8c8c"/></svg><svg width="9" height="9" viewBox="0 0 9 9"><path d="M1 1l7 7M8 1 1 8" stroke="#858585" stroke-width="2"/></svg></div>
      <p>Hay una nueva versión de Java lista para instalarse.<br>Haga clic aquí para continuar.</p>
    </div>
  </aside>
</div>
</body>
</html>
```
FILE: styles.css
```css
* { box-sizing: border-box; }
html, body { margin: 0; height: 100%; }
body { overflow: hidden; font-family: "Open Sans", "Noto Sans", sans-serif; }
p { margin: 0; }
i { font-style: normal; display: block; flex: none; }
svg { flex: none; display: block; }
.defs { position: absolute; }
.screen { position: relative; width: 1360px; height: 768px; overflow: hidden; background: #f2f1f0; white-space: nowrap; }

/* host panel */
.panel { height: 24px; display: flex; align-items: center; background: linear-gradient(#605d52, #4d4b44 25%, #3d3b37); color: #dfdbd2; }
.dots { display: flex; gap: 4px; padding-left: 6px; width: 75px; flex: none; }
.panel-title { font: bold 14px/24px "Open Sans"; letter-spacing: .17px; width: 935px; flex: none; }
.indicators { display: flex; align-items: center; font-size: 14px; }
.i-wifi { margin-left: 11px; }
.i-es { width: 20px; height: 20px; margin-left: 11px; background: #dfdbd2; color: #45433e; border-radius: 2px; font: bold 12px/20px "Open Sans"; text-align: center; }
.i-bt { margin-left: 11px; }
.i-bat { margin-left: 13px; }
.p-txt { font: 14px/24px "Noto Sans"; }
.i-time { width: 51px; padding-left: 3px; letter-spacing: .1px; }
.i-clock { width: 49px; padding-left: 13px; }
.i-gear { margin-left: 12px; }
.i-user { margin-left: 6px; }

/* launcher */
.launcher { position: absolute; left: 0; top: 24px; width: 57px; height: 744px; padding: 6px 0 0 6px; display: flex; flex-direction: column; gap: 7px; background: linear-gradient(#54585b, #74797b 14px, #777c7e 40%, #6a6e70); border-right: 1px solid #dfe3e6; }
.tile { position: relative; width: 44px; height: 44px; flex: none; border-radius: 4px; display: flex; align-items: center; justify-content: center; box-shadow: inset 0 0 0 1px rgba(255,255,255,.22), inset 0 8px 10px rgba(255,255,255,.12), 0 1px 3px rgba(0,0,0,.45); }
.t-dash { background: #8b989c; }
.t-ff { background: #bd7345; }
.t-gray { background: linear-gradient(#96989a, #7d8082); }
.t-vbox { background: #4573ba; }
.t-red { background: #994452; }
.t-writer { background: #3c86b0; }
.t-work { background: linear-gradient(#a5a5a7, #87898a); height: 42px; margin-top: -2px; }
.over { position: absolute; left: 12px; top: 15px; }
.c-green { color: #38a038; } .c-brown { color: #a7573a; } .c-blue { color: #2476ac; }
.pip { position: absolute; left: -6px; top: 18px; }
.pip-r { position: absolute; right: -6px; top: 18px; }
.folded { position: relative; height: 24px; flex: none; margin: -8px 0 0 -1px; }
.folded span { position: absolute; left: 16px; top: -9px; font: bold 19px/24px "Open Sans"; color: #222; transform: scaleX(1.2); }
.bin { flex: none; margin: -14px 0 0 -1px; height: 20px; }

/* guest screen */
.guest { position: absolute; left: 0; top: 0; width: 1360px; height: 707px; overflow: hidden; }
.desktop { position: absolute; left: 57px; top: 24px; width: 1303px; height: 722px; display: flex; justify-content: flex-end; background:
  linear-gradient(175deg, #0042a5 0, #0050b6 110px, #0066cc 220px, #0087e6 320px, #00a3f6 450px, #0aaef8 560px, #0099f2 680px) no-repeat 0 15px / 200px 700px,
  radial-gradient(circle at 1303px 60px, rgba(20,84,140,.7), transparent 300px),
  linear-gradient(180deg, transparent 0, transparent 200px, rgba(0,90,190,.3) 480px, transparent 680px),
  linear-gradient(90deg, #0042a4, #0057b4 75%, #024ba0 88%, #034590); }
.recycle { position: absolute; left: 61px; top: 32px; width: 84px; display: flex; flex-direction: column; align-items: center; color: #fff; font-size: 11.5px; line-height: 15px; letter-spacing: -.15px; text-shadow: 1px 1px 2px #000; }
.recycle svg { margin-bottom: 4px; }

/* window chrome */
.win { position: absolute; border: 1px solid #3f4650; border-radius: 7px 7px 0 0; padding: 0 7px; display: flex; flex-direction: column; background: linear-gradient(#bfcddb, #d7e4f1 30px); box-shadow: inset 0 1px 0 #eef4f9, inset 1px 0 0 #e4edf6; }
.titlebar { height: 28px; flex: none; display: flex; align-items: center; padding-top: 6px; }
.tt { font-size: 12px; color: #4b525c; margin-left: 6px; letter-spacing: -.35px; }
.t-prop { letter-spacing: -.44px; }
.ctl { display: flex; gap: 2px; margin: 2px 0 0 auto; align-self: flex-start; }
.ctl b { width: 31px; height: 18px; border: 1px solid #8596b2; border-radius: 2px; background: linear-gradient(#c3d0de, #d3dfec); display: flex; align-items: center; justify-content: center; }
.client { flex: 1; background: #f0f0f0; padding-left: 6px; }
.car { width: 0; height: 0; border: 3px solid transparent; border-top: 3px solid #111; border-bottom: 0; }
.sep { width: 1px; height: 19px; background: #bbb; }
.btn { height: 22px; border: 1px solid #707070; border-radius: 3px; background: linear-gradient(#f3f3f3, #ebebeb 49%, #dcdcdc 51%, #cfcfcf); box-shadow: inset 0 0 0 1px #fbfbfb; text-align: center; line-height: 20px; display: block; flex: none; }
.btn.dis { border-color: #b5b5b5; background: #f4f4f4; color: #8d8d8d; }
.btn.def { border-color: #3c7fb1; box-shadow: inset 0 0 0 1px #4fc4ec; }
.b73 { width: 73px; } .b91 { width: 91px; } .b112 { width: 112px; } .b122 { width: 121px; } .b159 { width: 159px; }
.lnk { display: block; color: #0a62c8; text-decoration: underline; }

.libre { left: 900px; top: 99px; width: 209px; height: 200px; }
.libre .titlebar { height: 29px; padding: 0; }
.libre .ctl { margin: 9px 1px 0 auto; }
.libre-body { flex: 1; background: linear-gradient(#fdfdfd, #ececec); padding-left: 24px; }
.lrow { display: flex; align-items: center; }
.lr1 { height: 26px; padding-left: 113px; gap: 22px; }
.lr2 { height: 40px; }
.lr3 { height: 36px; }
.lr2 .car { margin-left: 9px; }
.omega { font: bold 28px/30px "Liberation Serif"; color: #3a3f42; margin-left: 8px; width: 24px; }
.lr2 .sep { margin: 0 9px 0 8px; }
.chain { margin-left: 11px; }
.more { font: bold 15px/18px "Open Sans"; margin-left: auto; margin-right: 3px; color: #222; }
.lr3 .sep { margin-left: 6px; margin-right: 7px; }
.lr3 svg { margin-right: 7px; }
.lr3 .car + .sep { margin: 0 8px 0 6px; }
.nums { font: bold 10px/10px "DejaVu Serif"; color: #2a5298; margin: 0 2px 0 6px; }

.explorer { left: 118px; top: 38px; width: 814px; height: 260px; }
.explorer .titlebar { height: 31px; padding-top: 0; }
.explorer .ctl { margin: 9px 1px 0 auto; }
.addr { height: 32px; flex: none; display: flex; align-items: center; font-size: 12px; letter-spacing: -.2px; color: #4c4c58; margin-right: 1px; padding-bottom: 4px; }
.nav { margin-left: 1px; }
.path { width: 479px; height: 23px; margin-left: 1px; border: 1px solid #6b7480; border-bottom-color: #b3bec9; background: #f7fafd; display: flex; align-items: center; padding-left: 2px; }
.ar { width: 0; height: 0; border: 4px solid transparent; border-left: 4px solid #000; border-right: 0; margin: 0 9px; }
.path svg + .ar { margin-left: 8px; }
.w1 { width: 38px; letter-spacing: -.3px; } .w2 { width: 77px; } .w3 { width: 128px; letter-spacing: -.35px; }
.big { border-width: 4px; margin-left: 92px; border-top-color: #001257; }
.rf { border-left: 1px solid #6b7480; height: 21px; margin-left: auto; width: 26px; display: flex; align-items: center; justify-content: center; }
.search { width: 243px; height: 23px; margin-left: 5px; padding: 0 5px 0 8px; border: 1px solid #6b7480; border-bottom-color: #b3bec9; background: #f7fafd; display: flex; align-items: center; justify-content: space-between; font-style: italic; color: #6d6d6d; }
.search span { letter-spacing: -.08px; }
.toolbar { height: 32px; flex: none; display: flex; align-items: center; padding-left: 18px; font-size: 12px; letter-spacing: -.2px; color: #1e395b; background: linear-gradient(#fafdff, #e6f0fa 50%, #dce6f4 51%, #dde9f7); border-top: 1px solid #b4c3d4; border-bottom: 1px solid #a0afc3; }
.toolbar .nv { border-width: 4.500px; border-top: 5px solid #1e395b; border-bottom: 0; }
.tb1 { width: 56px; } .tbi { margin-left: 30px; } .tb2 { margin-left: 4px; width: 55px; letter-spacing: -.3px; }
.tb3 { width: 110px; } .tb4 { width: 82px; margin-left: 31px; } .tb5 { margin-left: 31px; width: 218px; letter-spacing: -.25px; }
.toolbar .v1 { margin-right: 9px; }
.v2 { margin-left: 22px; }
.help { margin-left: 20px; width: 16px; height: 16px; border-radius: 50%; background: linear-gradient(#5b83e0, #1d3fae); box-shadow: 0 0 0 1px #8d95a5; color: #fff; font: bold 11px/16px "Open Sans"; text-align: center; }
.ex-body { flex: 1; display: flex; background: #fcfcfc; font-size: 12px; letter-spacing: -.2px; }
.side { width: 159px; border-right: 1px solid #d6e5f5; padding: 9px 0 0 20px; }
.side div { height: 21px; display: flex; align-items: center; gap: 5px; }
.side .s1 { padding-left: 10px; letter-spacing: -.4px; }
.files { width: 620px; position: relative; }
.sortup { position: absolute; left: 138px; top: 1px; border: 4px solid transparent; border-bottom: 4px solid #6b9cc0; border-top: 0; }
.fh { display: flex; height: 24px; line-height: 26px; color: #4c607a; margin-bottom: 7px; }
.fh span { border-right: 1px solid #e2edf5; height: 22px; padding-left: 6px; }
.fh .c1 { width: 273px; padding-left: 18px; } .fh .c2, .fh .c3 { width: 120px; } .fh .c4 { width: 80px; }
.fr { height: 21px; width: 574px; margin-left: 15px; padding-left: 4px; display: flex; align-items: center; color: #6d6d6d; border: 1px solid transparent; }
.sel { border-color: #d9d9d9; border-radius: 3px; background: linear-gradient(#f8f8f8, #e5e5e5); height: 22px; }
.fn { width: 243px; padding-left: 3px; color: #000; letter-spacing: -.32px; } .fd { width: 120px; letter-spacing: -.58px; } .ft { letter-spacing: -.35px; }

/* dialogs */
.ms, .tabs { font-family: "Liberation Sans", Arial, sans-serif; font-size: 11px; line-height: 13px; color: #000; letter-spacing: -.21px; }
.tabs { display: flex; height: 27px; padding-top: 7px; align-items: flex-end; margin-bottom: -1px; position: relative; letter-spacing: -.1px; }
.tab { height: 18px; flex: none; line-height: 17px; border: 1px solid #898c95; background: linear-gradient(#f3f3f3, #ebebeb 49%, #dcdcdc 51%, #d2d2d2); text-align: center; margin-right: 1px; overflow: hidden; }
.tab.on { height: 21px; line-height: 19px; background: #fff; border-bottom: 0; margin: 0 0 0 -1px; }
.pane { background: #fff; border: 1px solid #898c95; padding-left: 14px; width: 600px; }
.props { left: 111px; top: 238px; width: 375px; height: 520px; }
.props .titlebar, .adv1 .titlebar { height: 29px; }
.props .titlebar .ctl { margin-top: 3px; }
.props .client, .adv1 .client { width: 344px; overflow: hidden; }
.props .tabs { padding-left: 2px; }
.ta1 { width: 49px; } .ta2 { width: 54px; } .tab.ta3 { width: 64px; } .ta4 { width: 106px; } .ta5 { width: 72px; }
.props .pane { height: 386px; }
.p-name { display: flex; margin-top: 14px; } .p-name span:first-child { width: 112px; letter-spacing: -.12px; } .p-name span:last-child { letter-spacing: -.1px; }
.p-groups { margin-top: 17px; }
.ulist { margin-top: 2px; height: 82px; border: 1px solid #828790; padding: 2px 0 0 5px; }
.u { display: flex; height: 17px; align-items: center; } .u span { padding-left: 2px; line-height: 17px; } .u svg { margin-top: -3px; }
.hl { background: #f0f0f0; width: 297px; }
.p-edit { display: flex; margin-top: 7px; height: 26px; } .p-edit p { width: 245px; }
.p-head { display: flex; margin-top: 5px; } .p-head p { width: 199px; } .h1c { width: 57px; padding-top: 5px; } .h2c { padding-top: 5px; }
.perm { margin-top: 2px; height: 103px; border: 1px solid #828790; display: flex; overflow: hidden; }
.perm-rows { width: 302px; padding: 3px 0 0 11px; line-height: 18px; }
.perm-rows div { display: flex; height: 18px; align-items: center; justify-content: space-between; padding-right: 78px; }
.sbar { width: 16px; background: #f2f2f2; display: flex; flex-direction: column; align-items: center; padding: 7px 0; }
.sbar b { width: 14px; height: 50px; border: 1px solid #9a9a9a; border-radius: 2px; margin: 7px 0 auto; background: linear-gradient(90deg, #f3f3f3, #ddd 55%, #ccc) ; }
.sbar b::after { content: ""; display: block; width: 7px; height: 8px; margin: 20px 0 0 3px; background: repeating-linear-gradient(#666 0 1px, transparent 1px 3px); }
.up { border: 3px solid transparent; border-bottom: 4px solid #444; border-top: 0; } .dn { border: 3px solid transparent; border-top: 4px solid #444; border-bottom: 0; }
.p-adv { display: flex; margin-top: 8px; } .p-adv p { width: 194px; overflow: hidden; }
.more-info { margin-top: 2px; }
.foot { display: flex; gap: 8px; margin: 8px 0 0 113px; letter-spacing: 0; }

.adv1 { left: 459px; top: 238px; width: 300px; height: 520px; }
.tab.tc1 { width: 58px; margin-left: 0; } .tc2 { width: 53px; } .tc3 { width: 61px; } .tc4 { width: 110px; text-align: left; padding-left: 4px; }
.adv1 .pane { height: 380px; }
.adv1 .titlebar svg, .adv2 .titlebar svg { margin-left: 1px; }
.adv1 .tt, .adv2 .tt { margin-left: 5px; }
.q1 { margin-top: 14px; } .q2 { display: flex; margin-top: 10px; } .q2 span:first-child { width: 106px; } .q3 { margin-top: 15px; }
.etable { margin-top: 5px; height: 172px; border: 1px solid #828790; }
.eh { height: 24px; line-height: 26px; border-bottom: 1px solid #d8d8d8; margin: 0 0 2px 1px; display: flex; background: linear-gradient(#fff 50%, #f3f4f5 51%); }
.eh span:first-child { width: 58px; padding-left: 6px; border-right: 1px solid #ddd; margin-right: 5px; }
.er { height: 17px; line-height: 17px; display: flex; margin-left: 5px; } .er span:first-child { width: 59px; padding-left: 2px; }
.hl2 { background: #f0f0f0; }
.adv1 .btn { margin: 13px 0 0 1px; }
.chk { display: flex; align-items: center; height: 13px; } .chk i { width: 13px; height: 13px; border: 1px solid #8e8f8f; margin-right: 3px; background: linear-gradient(135deg, #d5d8dc, #f8f8f8 80%); box-shadow: inset 0 0 0 1px #f4f4f4; padding: 1px; }
.gray { margin-top: 14px; color: #6d6d6d; }
.l2 { margin-top: 24px; }

.adv2 { left: 675px; top: 230px; width: 636px; height: 480px; }
.adv2 .titlebar { height: 29px; }
.adv2 .client { flex: none; height: 444px; width: 620px; padding-top: 27px; }
.tah { font-family: "Open Sans", "Noto Sans", sans-serif; font-size: 11px; line-height: 13px; letter-spacing: -.1px; }
.adv2 .pane { width: 607px; height: 380px; }
.r1 { margin: 12px 0 0 433px; letter-spacing: -.3px; }
.rtable { margin-top: 70px; width: 579px; height: 135px; border: 1px solid #828790; padding: 0 1px 0 1px; }
.rh { height: 24px; line-height: 26px; padding-left: 435px; border: solid #ddd; border-width: 0 1px 1px 0; margin-bottom: 2px; background: linear-gradient(#fff 50%, #f3f4f5 51%); letter-spacing: -.3px; }
.rr { height: 17px; line-height: 15px; padding-left: 435px; letter-spacing: -.03px; } .hl3 { background: #f0f0f0; }
.rbtns { display: flex; gap: 8px; margin: 13px 0 0 1px; letter-spacing: .1px; }
.adv2 .chk { letter-spacing: -.4px; } .adv2 .chk span { margin-top: -2px; margin-left: -1px; }
.k1 { margin-top: 19px; } .k2 { margin-top: 12px; }
.adv2 .chk i { margin-right: 3px; }
.l3 { margin-top: 30px; letter-spacing: -.3px; }
.foot3 { display: flex; gap: 9px; margin: 8px 0 0 453px; letter-spacing: -.2px; }

.dlg { left: 683px; top: 260px; width: 454px; height: 215px; border-color: #10181f; background: linear-gradient(#99b4d1, #bad0e9 30px); box-shadow: inset 0 1px 0 #e0ecf6, inset -1px -1px 0 #3fc6dc; }
.dlg .titlebar { height: 29px; }
.dlg .tt { margin-left: 4px; color: #111; }
.dlg .ctl { margin-top: 3px; margin-right: 1px; padding-top: 5px; }
.red b { height: 17px; background: linear-gradient(#e9a79b, #d78577 48%, #b9402b 52%, #cf6a55); border-color: #5b1b26; }
.dlg-body { flex: none; height: 177px; background: #f0f0f0; display: flex; padding: 8px 0 0 18px; }
.warn { margin-top: 15px; } .dlg-txt { margin-left: 21px; }
.g13 { margin-top: 13px; } .g1 { margin-top: 1px; } .g10 { margin-top: 10px; }
.dbtns { display: flex; gap: 11px; margin: 8px 0 0 25px; letter-spacing: -.1px; }
.dlg .ctl { padding-top: 0; }

/* numbered callouts */
.mark { position: absolute; background: #fff; color: #a23f44; font-family: "Open Sans"; }
.mark span { display: flex; width: 100%; height: 100%; align-items: center; justify-content: center; border: 7px solid #f80000; border-radius: 50%; background: #c6d4e9; }
.m1 { left: 293px; top: 568px; width: 58px; height: 62px; font: 300 21px "Open Sans"; }
.m2 { left: 466px; top: 530px; width: 55px; height: 59px; font: 300 20px "Open Sans"; }
.m3 { left: 665px; top: 556px; width: 39px; height: 42px; font-weight: bold; font-size: 17px; }
.m4 { left: 750px; top: 420px; width: 40px; height: 42px; font-weight: bold; font-size: 18px; }
.m1 span, .m2 span { padding-bottom: 3px; }
.m3 span, .m4 span { border-width: 5px; padding-top: 3px; }

/* guest taskbar */
.taskbar { position: absolute; left: 57px; top: 706px; width: 1303px; height: 40px; display: flex; align-items: center; border-top: 1px solid #42505f; border-bottom: 1px solid #dfe3e8; background: linear-gradient(90deg, #7d8fa8 0, #8798b2 50px, #a7bfdc 110px, #a7bfdc 990px, #8193ab 1045px); box-shadow: inset 0 1px 0 #c5d5e7; padding-left: 8px; }
.tfox { margin-left: 27px; }
.tbtn { width: 60px; height: 38px; border: 1px solid #4f6178; border-radius: 2px; box-shadow: inset 0 0 0 1px rgba(255,255,255,.7); background: linear-gradient(135deg, #e4edf6, #b2c6df); display: flex; align-items: center; justify-content: center; }
.w { margin-left: 17px; } .ie { margin-left: 16px; } .e { margin-left: 16px; width: 54px; }
.tedge { width: 5px; height: 38px; border: 1px solid #4f6178; border-left: 0; background: #cddcec; }
.wmp { margin-left: 19px; } .tchr { margin-left: 33px; }
.tray { margin-left: auto; display: flex; align-items: center; color: #fff; font-size: 12px; width: 271px; height: 38px; }
.t-es { width: 32px; font-size: 11.5px; margin-top: -6px; }
.tri { border: 4px solid transparent; border-bottom: 4px solid #fff; border-top: 0; margin-left: -2px; }
.jv { margin-left: 13px; } .fl { margin-left: 14px; } .pl { margin-left: 9px; } .nt { margin-left: 9px; } .sp { margin-left: 9px; }
.clk { display: flex; flex-direction: column; align-items: center; line-height: 17px; width: 60px; margin-left: 15px; font-size: 11.5px; letter-spacing: -.3px; }
.peek { margin-left: auto; margin-right: 2px; width: 13px; height: 38px; border: 1px solid #46566b; background: linear-gradient(120deg, #a9b9cd, #5e7088 50%, #7488a2); }
.status { position: absolute; left: 1042px; top: 747px; width: 318px; height: 20px; display: flex; align-items: center; gap: 5.050px; color: #3c3c3c; }
.status span { font: 14px/20px "Noto Sans"; letter-spacing: .12px; }

.balloon { position: absolute; left: 852px; top: 636px; width: 312px; height: 71px; border: 1px solid #6f6f6f; border-radius: 4px; background: linear-gradient(#fff, #e6e6f1); box-shadow: 3px 3px 3px rgba(0,0,0,.4); display: flex; padding: 12px 0 0 11px; font-size: 12px; }
.tail { position: absolute; left: 275px; top: 69px; }
.info { width: 16px; height: 16px; border-radius: 50%; border: 1px solid #8a93b0; background: linear-gradient(#5b83e0, #1d3fae); color: #fff; font: bold 11px/14px "DejaVu Serif"; text-align: center; }
.bal-main { margin: -3px 0 0 5px; }
.bal-h { display: flex; color: #123a9c; font-size: 15px; line-height: 20px; letter-spacing: .03px; }
.bal-h span { width: 236px; } .bal-h svg { margin: 2px 9px 0 0; }
.bal-main p { line-height: 15px; letter-spacing: -.38px; margin-top: 1px; }
```
